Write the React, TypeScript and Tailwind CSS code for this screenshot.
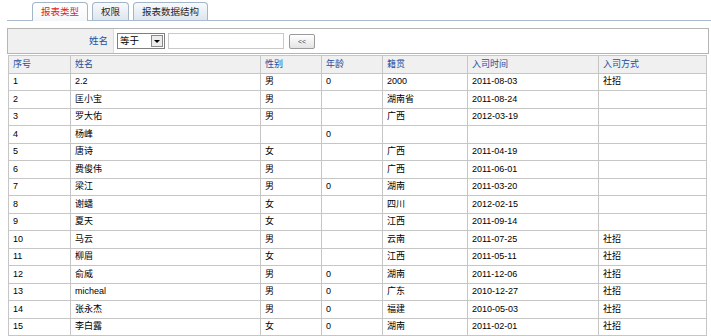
import React from "react"

const rows: string[][] = [
  ["1", "2.2", "男", "0", "2000", "2011-08-03", "社招"],
  ["2", "匡小宝", "男", "", "湖南省", "2011-08-24", ""],
  ["3", "罗大佑", "男", "", "广西", "2012-03-19", ""],
  ["4", "杨峰", "", "0", "", "", ""],
  ["5", "唐诗", "女", "", "广西", "2011-04-19", ""],
  ["6", "费俊伟", "男", "", "广西", "2011-06-01", ""],
  ["7", "梁江", "男", "0", "湖南", "2011-03-20", ""],
  ["8", "谢蟠", "女", "", "四川", "2012-02-15", ""],
  ["9", "夏天", "女", "", "江西", "2011-09-14", ""],
  ["10", "马云", "男", "", "云南", "2011-07-25", "社招"],
  ["11", "柳眉", "女", "", "江西", "2011-05-11", "社招"],
  ["12", "俞威", "男", "0", "湖南", "2011-12-06", "社招"],
  ["13", "micheal", "男", "0", "广东", "2010-12-27", "社招"],
  ["14", "张永杰", "男", "0", "福建", "2010-05-03", "社招"],
  ["15", "李白露", "女", "0", "湖南", "2011-02-01", "社招"],
]

const headers = ["序号", "姓名", "性别", "年龄", "籍贯", "入司时间", "入司方式"]
const widths = ["w-[62px]", "w-[190px]", "w-[61px]", "w-[61px]", "w-[85px]", "w-[131px]", "w-[108px]"]

function Tab({ label, active }: { label: string; active?: boolean }) {
  return (
    <div
      className={
        "px-[8px] mr-[4px] flex items-center rounded-t-[4px] border border-b-0 border-[#a3b5c8] text-[9.5px] leading-none " +
        (active
          ? "h-[19px] -mb-px bg-gradient-to-b from-white to-[#f4f7fa] text-[#e8202a]"
          : "h-[18px] bg-gradient-to-b from-[#f8fafc] to-[#dde5ee] text-[#2a2a2a]")
      }
    >
      {label}
    </div>
  )
}

export default function App() {
  return (
    <div
      className="w-[711px] h-[336px] bg-white overflow-hidden text-[9px] text-black"
      style={{ fontFamily: '"Liberation Sans", "Noto Sans CJK SC", sans-serif' }}
    >
      {/* tabs */}
      <div className="h-[21px] flex items-end pl-[25px] ml-[7px] border-b border-[#a9bccf]">
        <Tab label="报表类型" active />
        <Tab label="权限" />
        <Tab label="报表数据结构" />
      </div>

      {/* search bar */}
      <div className="mt-[7px] ml-[7px] w-[702px] h-[26px] border border-[#b5b5b5] flex text-[9.5px]">
        <div className="w-[106px] bg-[#f0f0f0] border-r border-[#dcdcdc] flex items-center justify-end pr-[5px] text-[#1f4fa0]">
          姓名
        </div>
        <div className="flex items-center pl-[3px] gap-[3px]">
          <div className="w-[48px] h-[16px] border border-[#7f7f7f] bg-white flex items-center justify-between pl-[2px] pr-[1px]">
            <span className="leading-none">等于</span>
            <span className="w-[12px] h-[12px] border border-[#8a8a8a] bg-[#ececec] flex items-center justify-center">
              <span className="w-0 h-0 border-l-[3px] border-r-[3px] border-t-[3px] border-l-transparent border-r-transparent border-t-black" />
            </span>
          </div>
          <div className="w-[116px] h-[16px] border border-[#c9c9c9] bg-white" />
          <div className="ml-[2px] w-[26px] h-[15px] border border-[#9a9a9a] rounded-[2px] bg-gradient-to-b from-white to-[#e4e4e4] flex items-center justify-center text-[7px] text-[#445] leading-none">
            &lt;&lt;
          </div>
        </div>
      </div>

      {/* table */}
      <table className="mt-[1px] ml-[8px] border-collapse border border-[#bdbdbd] table-fixed w-[698px]">
        <thead>
          <tr className="h-[17.5px] bg-[#f0f0f0]">
            {headers.map((h, i) => (
              <th
                key={h}
                className={
                  widths[i] +
                  " border border-[#c6c6c6] text-left font-normal text-[#1f4fa0] pl-[4px] py-0 leading-none"
                }
              >
                {h}
              </th>
            ))}
          </tr>
        </thead>
        <tbody>
          {rows.map((r) => (
            <tr key={r[0]} className="h-[17.5px]">
              {r.map((c, j) => (
                <td key={j} className="border border-[#c6c6c6] pl-[4px] py-0 leading-none whitespace-nowrap">
                  {c}
                </td>
              ))}
            </tr>
          ))}
        </tbody>
      </table>
    </div>
  )
}
